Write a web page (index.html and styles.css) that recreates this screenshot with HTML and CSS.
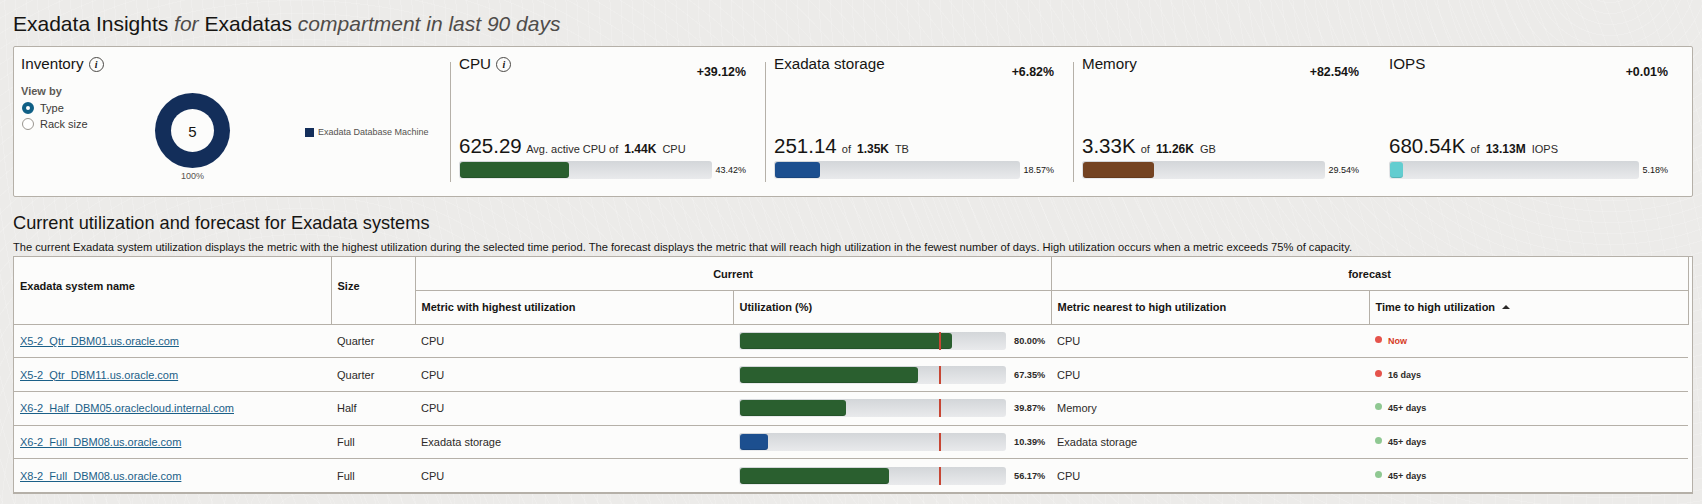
FILE: index.html
```html
<!DOCTYPE html>
<html lang="en">
<head>
  <meta charset="UTF-8" />
  <title>Exadata Insights</title>
  <link rel="stylesheet" href="styles.css">
</head>
<body>
  <h1 class="page-title">Exadata Insights <em>for</em> Exadatas <em>compartment in last 90 days</em></h1>

  <section class="summary">
    <div class="inventory">
      <div class="inv-left">
        <h2 class="card-title">Inventory <span class="info">i</span></h2>
        <div class="view-by">View by</div>
        <div class="radio-row"><span class="radio radio-on"></span>Type</div>
        <div class="radio-row"><span class="radio"></span>Rack size</div>
      </div>
      <div class="donut-col">
        <div class="donut"><div class="donut-hole">5</div></div>
        <div class="donut-pct">100%</div>
      </div>
      <div class="legend"><span class="legend-box"></span>Exadata Database Machine</div>
    </div>

    <div class="metric metric-cpu">
      <div class="metric-head">
        <h2 class="card-title">CPU <span class="info">i</span></h2>
        <span class="delta">+39.12%</span>
      </div>
      <div class="metric-value"><span class="big">625.29</span> Avg. active CPU of <b>1.44K</b> CPU</div>
      <div class="bar-row">
        <div class="bar"><div class="fill green" style="width: 43.42%"></div></div>
        <span class="pct">43.42%</span>
      </div>
    </div>

    <div class="metric metric-storage">
      <div class="metric-head">
        <h2 class="card-title">Exadata storage</h2>
        <span class="delta">+6.82%</span>
      </div>
      <div class="metric-value"><span class="big">251.14</span> of <b>1.35K</b> TB</div>
      <div class="bar-row">
        <div class="bar"><div class="fill blue" style="width: 18.57%"></div></div>
        <span class="pct">18.57%</span>
      </div>
    </div>

    <div class="metric metric-memory">
      <div class="metric-head">
        <h2 class="card-title">Memory</h2>
        <span class="delta">+82.54%</span>
      </div>
      <div class="metric-value"><span class="big">3.33K</span> of <b>11.26K</b> GB</div>
      <div class="bar-row">
        <div class="bar"><div class="fill brown" style="width: 29.54%"></div></div>
        <span class="pct">29.54%</span>
      </div>
    </div>

    <div class="metric metric-iops">
      <div class="metric-head">
        <h2 class="card-title">IOPS</h2>
        <span class="delta">+0.01%</span>
      </div>
      <div class="metric-value"><span class="big">680.54K</span> of <b>13.13M</b> IOPS</div>
      <div class="bar-row">
        <div class="bar"><div class="fill teal" style="width: 5.18%"></div></div>
        <span class="pct">5.18%</span>
      </div>
    </div>
  </section>

  <h2 class="section-title">Current utilization and forecast for Exadata systems</h2>
  <p class="section-desc">The current Exadata system utilization displays the metric with the highest utilization during the selected time period. The forecast displays the metric that will reach high utilization in the fewest number of days. High utilization occurs when a metric exceeds 75% of capacity.</p>

  <div class="table-wrap">
    <table>
      <colgroup>
        <col class="c-name"><col class="c-size"><col class="c-wide"><col class="c-wide"><col class="c-wide"><col class="c-last">
      </colgroup>
      <thead>
        <tr>
          <th rowspan="2" class="raised">Exadata system name</th>
          <th rowspan="2" class="raised">Size</th>
          <th colspan="2" class="center">Current</th>
          <th colspan="2" class="center">forecast</th>
        </tr>
        <tr>
          <th>Metric with highest utilization</th>
          <th>Utilization (%)</th>
          <th>Metric nearest to high utilization</th>
          <th>Time to high utilization <span class="sort-up"></span></th>
        </tr>
      </thead>
      <tbody>
        <tr>
          <td><a href="#">X5-2_Qtr_DBM01.us.oracle.com</a></td>
          <td>Quarter</td>
          <td>CPU</td>
          <td><div class="util"><div class="bar"><div class="fill green" style="width: 80%"></div><span class="marker"></span></div><span class="util-pct">80.00%</span></div></td>
          <td>CPU</td>
          <td class="time now"><span class="dot red"></span>Now</td>
        </tr>
        <tr>
          <td><a href="#">X5-2_Qtr_DBM11.us.oracle.com</a></td>
          <td>Quarter</td>
          <td>CPU</td>
          <td><div class="util"><div class="bar"><div class="fill green" style="width: 67.35%"></div><span class="marker"></span></div><span class="util-pct">67.35%</span></div></td>
          <td>CPU</td>
          <td class="time"><span class="dot red"></span>16 days</td>
        </tr>
        <tr>
          <td><a href="#">X6-2_Half_DBM05.oraclecloud.internal.com</a></td>
          <td>Half</td>
          <td>CPU</td>
          <td><div class="util"><div class="bar"><div class="fill green" style="width: 39.87%"></div><span class="marker"></span></div><span class="util-pct">39.87%</span></div></td>
          <td>Memory</td>
          <td class="time"><span class="dot lime"></span>45+ days</td>
        </tr>
        <tr>
          <td><a href="#">X6-2_Full_DBM08.us.oracle.com</a></td>
          <td>Full</td>
          <td>Exadata storage</td>
          <td><div class="util"><div class="bar"><div class="fill blue" style="width: 10.39%"></div><span class="marker"></span></div><span class="util-pct">10.39%</span></div></td>
          <td>Exadata storage</td>
          <td class="time"><span class="dot lime"></span>45+ days</td>
        </tr>
        <tr>
          <td><a href="#">X8-2_Full_DBM08.us.oracle.com</a></td>
          <td>Full</td>
          <td>CPU</td>
          <td><div class="util"><div class="bar"><div class="fill green" style="width: 56.17%"></div><span class="marker"></span></div><span class="util-pct">56.17%</span></div></td>
          <td>CPU</td>
          <td class="time"><span class="dot lime"></span>45+ days</td>
        </tr>
      </tbody>
    </table>
  </div>
</body>
</html>
```

FILE: styles.css
```css
* {
  box-sizing: border-box;
}

body {
  margin: 0;
  height: 504px;
  overflow: hidden;
  padding: 0 9px 0 13px;
  font-family: 'Liberation Sans', Arial, sans-serif;
  color: #161513;
  background-color: #ecebe9;
  background-image:
    repeating-radial-gradient(circle at 1610px -30px, transparent 0 10px, rgba(255,255,255,0.16) 10px 11px),
    repeating-radial-gradient(circle at 300px 520px, transparent 0 12px, rgba(255,255,255,0.14) 12px 13px);
}

.page-title {
  margin: 0;
  height: 46px;
  padding-top: 11px;
  font-size: 21px;
  line-height: 26px;
  font-weight: 400;
}

.page-title em {
  color: #4f4c49;
}

.summary {
  display: flex;
  height: 151px;
  padding: 15px 0 0;
  background: #fcfcfb;
  border: 1px solid #b5b0a8;
  border-radius: 2px;
}

.inventory {
  display: flex;
  width: 436px;
  height: 120px;
}

.inv-left {
  width: 110px;
  margin-top: -7px;
  padding-left: 7px;
}

.card-title {
  margin: 0;
  font-size: 15.2px;
  line-height: 18px;
  font-weight: 400;
  white-space: nowrap;
}

.info {
  display: inline-block;
  width: 15px;
  height: 15px;
  border: 1px solid #4a4845;
  border-radius: 50%;
  font-family: 'Liberation Serif', serif;
  font-size: 10px;
  font-style: italic;
  font-weight: 700;
  line-height: 13px;
  text-align: center;
  vertical-align: 1px;
  margin-left: 1px;
}

.view-by {
  margin-top: 11px;
  font-size: 11px;
  line-height: 14px;
  font-weight: 700;
  color: #5c5955;
}

.radio-row {
  display: flex;
  align-items: center;
  gap: 6px;
  height: 16px;
  font-size: 11px;
  color: #3a3835;
}

.view-by + .radio-row {
  margin-top: 2px;
}

.radio {
  width: 12px;
  height: 12px;
  margin-left: 1px;
  border: 1px solid #9a9690;
  border-radius: 50%;
  background: #fff;
}

.radio-on {
  border: 4px solid #0f5f85;
}

.donut-col {
  width: 75px;
  margin-left: 31px;
  padding-top: 31px;
}

.donut {
  display: flex;
  align-items: center;
  justify-content: center;
  width: 75px;
  height: 75px;
  border-radius: 50%;
  background: #132e5a;
}

.donut-hole {
  width: 43px;
  height: 43px;
  border-radius: 50%;
  background: #fcfcfb;
  font-size: 15px;
  line-height: 45px;
  text-align: center;
}

.donut-pct {
  margin-top: 2px;
  font-size: 9px;
  line-height: 12px;
  text-align: center;
  color: #55524e;
}

.legend {
  display: flex;
  align-items: center;
  gap: 4px;
  height: 16px;
  margin: 62px 0 0 75px;
  font-size: 9px;
  color: #55524e;
  white-space: nowrap;
}

.legend-box {
  width: 9px;
  height: 9px;
  background: #132e5a;
}

.metric {
  display: flex;
  flex-direction: column;
  height: 120px;
  padding: 0 0 3px 8px;
  border-left: 1px solid #b5b0a8;
}

.metric-cpu {
  width: 315px;
  padding-right: 19px;
}

.metric-storage {
  width: 308px;
  padding-right: 19px;
}

.metric-memory {
  width: 307px;
  padding-right: 21px;
}

.metric-iops {
  width: 296px;
  padding-right: 8px;
  border-left: 0;
  padding-left: 9px;
}

.metric-head {
  display: flex;
  justify-content: space-between;
  align-items: flex-start;
  flex: 1;
  margin-top: -7px;
}

.delta {
  margin-top: 10px;
  font-size: 12.4px;
  line-height: 14px;
  font-weight: 700;
}

.metric-value {
  font-size: 11px;
  line-height: 24px;
  color: #2c2a28;
  white-space: nowrap;
}

.metric-value b {
  margin: 0 3px;
  font-size: 12px;
  color: #161513;
}

.big {
  margin-right: 2px;
  font-size: 20.5px;
  color: #161513;
}

.bar-row {
  display: flex;
  align-items: center;
  gap: 3px;
}

.bar {
  position: relative;
  flex: 1;
  height: 18px;
  padding: 1px;
  border-radius: 3px;
  background: linear-gradient(#d3d6d9, #e9eaec);
}

.fill {
  height: 100%;
  border-radius: 3px;
  box-shadow: inset 0 -1px 0 rgba(0,0,0,0.12);
}

.green {
  background: #2a5f2f;
}

.blue {
  background: #1c4f8f;
}

.brown {
  background: #744322;
}

.teal {
  background: #62cdd0;
}

.pct {
  font-size: 9px;
  line-height: 12px;
  color: #161513;
}

.section-title {
  margin: 0;
  padding-top: 16px;
  font-size: 18.2px;
  line-height: 20px;
  font-weight: 400;
}

.section-desc {
  margin: 0;
  padding-top: 8px;
  height: 23px;
  font-size: 11.15px;
  line-height: 13px;
  white-space: nowrap;
}

.table-wrap {
  width: 1680px;
  padding-right: 4px;
  background: #fcfcfb;
  border: 1px solid #b5b0a8;
  border-width: 1px 1px 2px 1px;
}

table {
  width: 1674px;
  table-layout: fixed;
  border-collapse: collapse;
  font-size: 11px;
}

.c-name { width: 317px; }
.c-size { width: 84px; }
.c-wide { width: 318px; }
.c-last { width: 319px; }

th {
  height: 33.5px;
  padding: 0 6px;
  text-align: left;
  font-weight: 700;
  border: 1px solid #b5b0a8;
}

th:first-child {
  border-left: 0;
}

thead tr:first-child th {
  border-top: 0;
}

th.center {
  text-align: center;
}

th.raised {
  padding-bottom: 8px;
}

td {
  height: 33.7px;
  padding: 0 6px;
  color: #2c2a28;
  border-bottom: 1px solid #b5b0a8;
}

tbody tr:last-child td {
  border-bottom: 0;
}

a {
  color: #1b6088;
}

.sort-up {
  display: inline-block;
  width: 0;
  height: 0;
  margin-left: 4px;
  border: 4px solid transparent;
  border-top: 0;
  border-bottom: 4px solid #2c2a28;
  vertical-align: 2px;
}

.util {
  display: flex;
  align-items: center;
  gap: 8px;
}

.marker {
  position: absolute;
  top: 0;
  bottom: 0;
  left: 75%;
  width: 2px;
  background: #c74634;
}

.util-pct {
  width: 31px;
  font-size: 9.2px;
  font-weight: 700;
  white-space: nowrap;
}

.time {
  font-size: 9px;
  font-weight: 700;
}

.now {
  color: #d63b25;
}

.dot {
  display: inline-block;
  width: 7px;
  height: 7px;
  margin-right: 6px;
  border-radius: 50%;
  vertical-align: 1px;
}

.red {
  background: #e5534b;
}

.lime {
  background: #8fc892;
}
```
